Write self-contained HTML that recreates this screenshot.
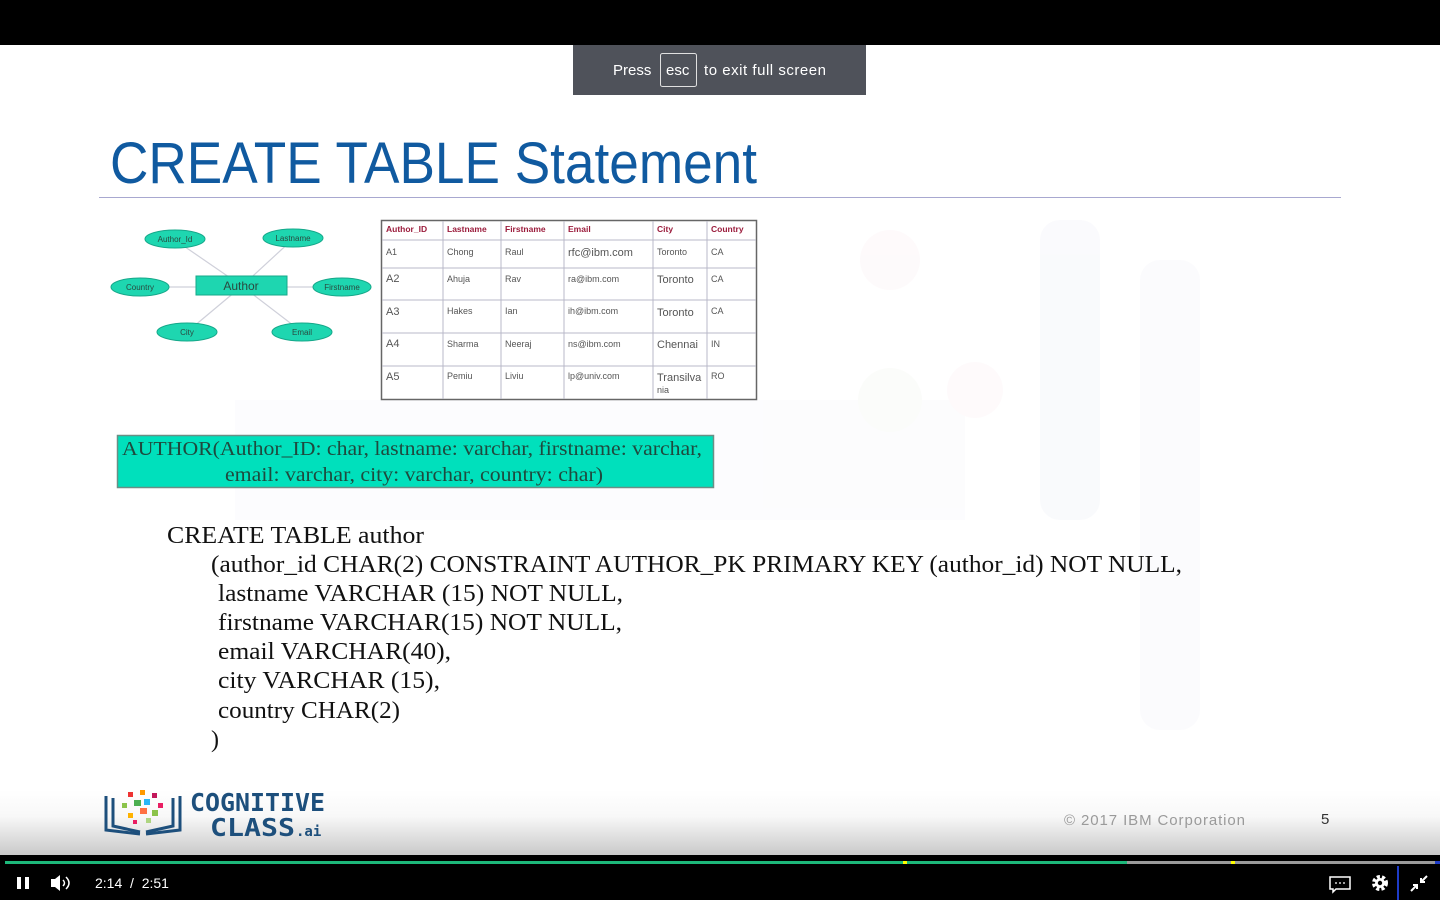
<!DOCTYPE html>
<html><head><meta charset="utf-8"><style>
html,body{margin:0;padding:0;width:1440px;height:900px;overflow:hidden;background:#fff;font-family:"Liberation Sans",sans-serif}
svg{position:absolute;left:0;top:0}
</style></head><body>
<svg width="1440" height="900" viewBox="0 0 1440 900" xmlns="http://www.w3.org/2000/svg">
<defs>
<linearGradient id="bg" x1="0" y1="0" x2="0" y2="1">
<stop offset="0" stop-color="#fff"/><stop offset="0.4" stop-color="#f8f8f8"/><stop offset="1" stop-color="#c8c8c8"/>
</linearGradient>
</defs>
<rect width="1440" height="900" fill="#fff"/>
<g opacity="0.3">
<rect x="1040" y="220" width="60" height="300" rx="20" fill="#eef0f8"/>
<rect x="1140" y="260" width="60" height="470" rx="20" fill="#f2f3f9"/>
<rect x="235" y="400" width="730" height="120" fill="#f6f6fb"/>
<circle cx="890" cy="260" r="30" fill="#fbf0f2"/>
<circle cx="890" cy="400" r="32" fill="#f3f8f0"/>
<circle cx="975" cy="390" r="28" fill="#fcf0f3"/>
</g>
<rect x="0" y="790" width="1440" height="66" fill="url(#bg)"/>
<rect x="0" y="0" width="1440" height="45" fill="#000"/>
<rect x="573" y="45" width="293" height="50" fill="#4f525a"/>
<text x="613" y="75" font-size="15" fill="#fff">Press</text>
<rect x="660.5" y="53.5" width="36" height="33" rx="2" fill="none" stroke="#e0e0e0" stroke-width="1"/>
<text x="666" y="75" font-size="15" fill="#fff">esc</text>
<text x="704" y="75" font-size="15" fill="#fff" textLength="122">to exit full screen</text>
<text x="110" y="183" font-size="58" fill="#105aa0" textLength="647" lengthAdjust="spacingAndGlyphs">CREATE TABLE Statement</text>
<line x1="99" y1="197.5" x2="1341" y2="197.5" stroke="#a8a8d0" stroke-width="1"/>
<g stroke="#cfd0da" stroke-width="1.2">
<line x1="175" y1="240" x2="242" y2="286"/><line x1="293" y1="239" x2="242" y2="286"/>
<line x1="140" y1="287" x2="342" y2="287"/><line x1="187" y1="332" x2="242" y2="286"/><line x1="302" y1="332" x2="242" y2="286"/>
</g>
<g fill="#1ed6b0" stroke="#16a88a" stroke-width="1">
<ellipse cx="175" cy="239" rx="30" ry="9"/><ellipse cx="293" cy="238" rx="30" ry="9"/>
<ellipse cx="140" cy="287" rx="29" ry="9"/><ellipse cx="342" cy="287" rx="29" ry="9"/>
<ellipse cx="187" cy="332" rx="30" ry="9"/><ellipse cx="302" cy="332" rx="30" ry="9"/>
<rect x="196" y="276" width="91" height="19"/>
</g>
<g font-size="8" fill="#2a4a40" text-anchor="middle">
<text x="175" y="242">Author_Id</text><text x="293" y="241">Lastname</text>
<text x="140" y="290">Country</text><text x="342" y="290">Firstname</text>
<text x="187" y="335">City</text><text x="302" y="335">Email</text>
</g>
<text x="241" y="290" font-size="12" fill="#2a4a40" text-anchor="middle">Author</text>
<rect x="381.5" y="220.5" width="375" height="179" fill="#fff" stroke="#666" stroke-width="1.5"/>
<g stroke="#b8b8c8" stroke-width="1">
<line x1="443" y1="221" x2="443" y2="399"/><line x1="501" y1="221" x2="501" y2="399"/>
<line x1="564" y1="221" x2="564" y2="399"/><line x1="653" y1="221" x2="653" y2="399"/>
<line x1="707" y1="221" x2="707" y2="399"/>
<line x1="382" y1="240" x2="756" y2="240"/><line x1="382" y1="268" x2="756" y2="268"/>
<line x1="382" y1="300" x2="756" y2="300"/><line x1="382" y1="333" x2="756" y2="333"/>
<line x1="382" y1="366" x2="756" y2="366"/>
</g>
<g font-size="8.5" fill="#9b1c3c" font-weight="bold">
<text x="386" y="232">Author_ID</text><text x="447" y="232">Lastname</text><text x="505" y="232">Firstname</text>
<text x="568" y="232">Email</text><text x="657" y="232">City</text><text x="711" y="232">Country</text>
</g>
<g font-size="9" fill="#555">
<text x="386" y="255">A1</text><text x="447" y="255">Chong</text><text x="505" y="255">Raul</text><text x="568" y="256" font-size="11">rfc@ibm.com</text><text x="657" y="255">Toronto</text><text x="711" y="255">CA</text>
<text x="386" y="282" font-size="11">A2</text><text x="447" y="282">Ahuja</text><text x="505" y="282">Rav</text><text x="568" y="282">ra@ibm.com</text><text x="657" y="283" font-size="11">Toronto</text><text x="711" y="282">CA</text>
<text x="386" y="315" font-size="11">A3</text><text x="447" y="314">Hakes</text><text x="505" y="314">Ian</text><text x="568" y="314">ih@ibm.com</text><text x="657" y="316" font-size="11">Toronto</text><text x="711" y="314">CA</text>
<text x="386" y="347" font-size="11">A4</text><text x="447" y="347">Sharma</text><text x="505" y="347">Neeraj</text><text x="568" y="347">ns@ibm.com</text><text x="657" y="348" font-size="11">Chennai</text><text x="711" y="347">IN</text>
<text x="386" y="380" font-size="11">A5</text><text x="447" y="379">Pemiu</text><text x="505" y="379">Liviu</text><text x="568" y="379">lp@univ.com</text><text x="657" y="381" font-size="11">Transilva</text><text x="657" y="393">nia</text><text x="711" y="379">RO</text>
</g>
<rect x="117.5" y="435.5" width="596" height="52" fill="#00e0bc" stroke="#6a8f86" stroke-width="1.5"/>
<g font-family="Liberation Serif" font-size="20" fill="#1e4a3e" text-anchor="middle">
<text x="412" y="455" textLength="580" lengthAdjust="spacingAndGlyphs">AUTHOR(Author_ID: char, lastname: varchar, firstname: varchar,</text>
<text x="414" y="481" textLength="378" lengthAdjust="spacingAndGlyphs">email: varchar, city: varchar, country: char)</text>
</g>
<g font-family="Liberation Serif" font-size="24" fill="#111">
<text x="167" y="543" textLength="257" lengthAdjust="spacingAndGlyphs">CREATE TABLE author</text>
<text x="211" y="572" textLength="971" lengthAdjust="spacingAndGlyphs">(author_id CHAR(2) CONSTRAINT AUTHOR_PK PRIMARY KEY (author_id) NOT NULL,</text>
<text x="218" y="601" textLength="405" lengthAdjust="spacingAndGlyphs">lastname VARCHAR (15) NOT NULL,</text>
<text x="218" y="630" textLength="404" lengthAdjust="spacingAndGlyphs">firstname VARCHAR(15) NOT NULL,</text>
<text x="218" y="659" textLength="233" lengthAdjust="spacingAndGlyphs">email VARCHAR(40),</text>
<text x="218" y="688" textLength="222" lengthAdjust="spacingAndGlyphs">city VARCHAR (15),</text>
<text x="218" y="718" textLength="182" lengthAdjust="spacingAndGlyphs">country CHAR(2)</text>
<text x="211" y="747">)</text>
</g>
<g fill="none" stroke="#1d4f7c" stroke-width="3">
<path d="M106 796 V830 L140 834"/><path d="M113 798 V826 L140 832"/><path d="M180 796 V830 L146 834"/><path d="M173 798 V826 L146 832"/>
</g>
<g>
<rect x="128" y="792" width="5" height="5" fill="#e33"/><rect x="140" y="790" width="5" height="5" fill="#f90"/>
<rect x="152" y="793" width="5" height="5" fill="#c2185b"/><rect x="122" y="803" width="5" height="5" fill="#8bc34a"/>
<rect x="134" y="800" width="7" height="6" fill="#4caf50"/><rect x="144" y="799" width="6" height="6" fill="#29b6f6"/>
<rect x="158" y="803" width="5" height="5" fill="#e91e63"/><rect x="140" y="808" width="7" height="6" fill="#ff7043"/>
<rect x="152" y="810" width="6" height="6" fill="#8bc34a"/><rect x="128" y="813" width="5" height="5" fill="#ffb300"/>
<rect x="146" y="818" width="5" height="5" fill="#aed581"/><rect x="133" y="820" width="4" height="4" fill="#e91e63"/>
</g>
<g font-family="DejaVu Sans Mono" font-weight="bold" fill="#1d4f7c">
<text x="190" y="811" font-size="25" textLength="135" lengthAdjust="spacingAndGlyphs">COGNITIVE</text>
<text x="210" y="836" font-size="25" textLength="85" lengthAdjust="spacingAndGlyphs">CLASS</text>
<text x="296" y="836" font-size="14">.ai</text>
</g>
<text x="1064" y="825" font-size="15" fill="#9a9a9a" textLength="181">© 2017 IBM Corporation</text>
<text x="1321" y="824" font-size="15" fill="#333">5</text>
<rect x="0" y="855" width="1440" height="45" fill="#000"/>
<rect x="5" y="861" width="1430" height="3" fill="#9a9a9a"/>
<rect x="5" y="861" width="1122" height="3" fill="#1db87a"/>
<rect x="903" y="861" width="4" height="3" fill="#ff0"/>
<rect x="1231" y="861" width="4" height="3" fill="#ff0"/>
<rect x="1435" y="861" width="5" height="3" fill="#1e3cc8"/>
<rect x="17" y="877" width="4" height="12" fill="#fff"/><rect x="25" y="877" width="4" height="12" fill="#fff"/>
<path d="M51 879 h4 l5 -4 v16 l-5 -4 h-4z" fill="#fff"/>
<path d="M63 880 q3 3 0 6 M66 877 q6 6 0 12" stroke="#fff" stroke-width="1.5" fill="none"/>
<text x="95" y="888" font-size="14" fill="#fff" xml:space="preserve">2:14  /  2:51</text>
<path d="M1330 877 h20 v12 h-14 l-3 3 v-3 h-3z" fill="none" stroke="#fff" stroke-width="1.5"/>
<path d="M1335 883 h2 M1339 883 h2 M1343 883 h2" stroke="#fff" stroke-width="1.2"/>
<circle cx="1380" cy="883" r="6" fill="none" stroke="#fff" stroke-width="4" stroke-dasharray="3 2"/>
<circle cx="1380" cy="883" r="5" fill="#fff"/><circle cx="1380" cy="883" r="2.2" fill="#000"/>
<line x1="1398" y1="866" x2="1398" y2="900" stroke="#1e3cc8" stroke-width="2"/>
<path d="M1411 891 l6 -6 M1413 885 h4 v4 M1427 876 l-6 6 M1425 882 h-4 v-4" stroke="#fff" stroke-width="2" fill="none"/>
</svg>
</body></html>
